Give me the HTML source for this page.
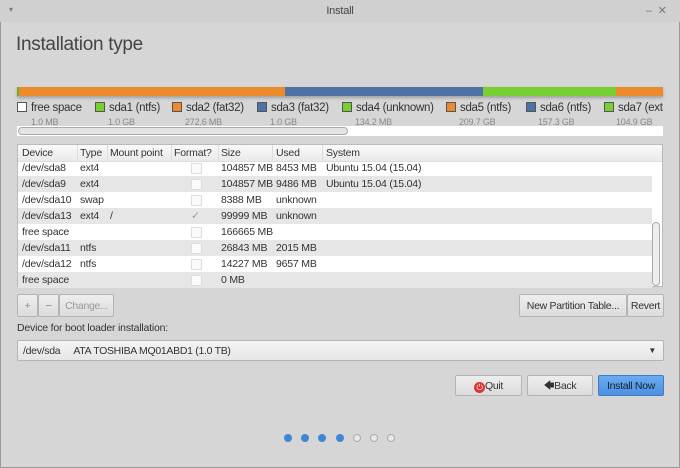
<html><head><style>
body{margin:0;width:680px;height:468px;background:#d4d4d4;font-family:"Liberation Sans",sans-serif;font-size:10px;letter-spacing:-0.2px;color:#333;position:relative;overflow:hidden}
.a{position:absolute;white-space:nowrap}
.win{left:0;top:0;width:678px;height:466px;border:1px solid #9a9a9a;background:#d6d6d6}
.btn{position:absolute;border:1px solid #b4b4b4;border-radius:2px;background:linear-gradient(#eee,#dcdcdc);text-align:center;box-sizing:border-box;line-height:22px;color:#333;white-space:nowrap;font-size:10.5px;letter-spacing:-0.3px}
.sq{display:inline-block;width:8px;height:8px;border:1px solid #555;vertical-align:-1px;margin-right:4px}
.lg{position:absolute;top:102px;font-size:11.5px;letter-spacing:-0.3px;white-space:nowrap}
.row{position:absolute;left:18px;width:634px;height:16px;line-height:17px;font-size:10.5px}
.row span{position:absolute}
.cb{position:absolute;top:3px;width:9px;height:9px;border:1px solid #ddd;background:#fafafa}
.dot{position:absolute;top:434px;width:8px;height:8px;border-radius:50%}
</style></head><body>
<div class="a win"></div>
<div class="a" style="left:0;top:0;width:680px;height:22px;background:#d0d0d0;text-align:center;line-height:22px;font-size:11px;color:#444">Install</div>
<div class="a" style="left:9px;top:5px;font-size:8px;color:#777">▾</div>
<div class="a" style="left:646px;top:4px;color:#777;font-size:11px">–&nbsp;&nbsp;✕</div>
<div class="a" style="left:16px;top:34px;font-size:19px;letter-spacing:-0.3px;color:#444">Installation type</div>
<div class="a" style="left:17px;top:87px;width:646px;height:9px;background:#eee;box-shadow:0 2px 3px rgba(0,0,0,.25)">
<div class="a" style="left:0;width:2px;height:9px;background:#6ab02b"></div>
<div class="a" style="left:2px;width:266px;height:9px;background:#ec8a2c"></div>
<div class="a" style="left:268px;width:198px;height:9px;background:#4d72a7"></div>
<div class="a" style="left:466px;width:133px;height:9px;background:#78cf31"></div>
<div class="a" style="left:599px;width:47px;height:9px;background:#ec8a2c"></div>
</div>
<div style="position:absolute;left:0;top:0;width:663px;height:140px;overflow:hidden">
<div class="lg" style="left:17px"><span class="sq" style="background:#fff"></span>free space</div>
<div class="lg" style="left:95px"><span class="sq" style="background:#78cf31"></span>sda1 (ntfs)</div>
<div class="lg" style="left:172px"><span class="sq" style="background:#ec8a2c"></span>sda2 (fat32)</div>
<div class="lg" style="left:257px"><span class="sq" style="background:#4d72a7"></span>sda3 (fat32)</div>
<div class="lg" style="left:342px"><span class="sq" style="background:#78cf31"></span>sda4 (unknown)</div>
<div class="lg" style="left:446px"><span class="sq" style="background:#ec8a2c"></span>sda5 (ntfs)</div>
<div class="lg" style="left:526px"><span class="sq" style="background:#4d72a7"></span>sda6 (ntfs)</div>
<div class="lg" style="left:604px"><span class="sq" style="background:#78cf31"></span>sda7 (ext4</div>
<div class="a" style="top:117px;left:0;font-size:9px;color:#888">
<span class="a" style="left:31px">1.0 MB</span><span class="a" style="left:108px">1.0 GB</span><span class="a" style="left:185px">272.6 MB</span><span class="a" style="left:270px">1.0 GB</span><span class="a" style="left:355px">134.2 MB</span><span class="a" style="left:459px">209.7 GB</span><span class="a" style="left:538px">157.3 GB</span><span class="a" style="left:616px">104.9 GB</span></div>
</div>
<div class="a" style="left:17px;top:126px;width:646px;height:10px;background:#fff"><div class="a" style="left:1px;top:1px;width:328px;height:6px;border:1px solid #aaa;border-radius:4px;background:#e4e4e4"></div></div>
<div class="a" style="left:17px;top:144px;width:646px;height:143px;background:#fff;border:1px solid #bbb;box-sizing:border-box;overflow:hidden">
<div class="a" style="left:0;top:0;width:646px;height:16px;background:linear-gradient(#fafafa,#eaeaea);border-bottom:1px solid #ddd;line-height:16px;font-size:10.5px">
<span class="a" style="left:4px">Device</span><span class="a" style="left:62px">Type</span><span class="a" style="left:92px">Mount point</span><span class="a" style="left:156px">Format?</span><span class="a" style="left:203px">Size</span><span class="a" style="left:258px">Used</span><span class="a" style="left:308px">System</span>
<div class="a" style="left:59px;top:0;width:1px;height:16px;background:#ddd"></div><div class="a" style="left:89px;width:1px;height:16px;background:#ddd"></div><div class="a" style="left:153px;width:1px;height:16px;background:#ddd"></div><div class="a" style="left:200px;width:1px;height:16px;background:#ddd"></div><div class="a" style="left:254px;width:1px;height:16px;background:#ddd"></div><div class="a" style="left:304px;width:1px;height:16px;background:#ddd"></div>
</div>
</div>
<div class="a" style="left:0;top:0">
<div class="row" style="top:160px"><span style="left:4px">/dev/sda8</span><span style="left:62px">ext4</span><i class="cb" style="left:173px"></i><span style="left:203px">104857 MB</span><span style="left:258px">8453 MB</span><span style="left:308px">Ubuntu 15.04 (15.04)</span></div>
<div class="row" style="top:176px;background:#e6e6e6"><span style="left:4px">/dev/sda9</span><span style="left:62px">ext4</span><i class="cb" style="left:173px"></i><span style="left:203px">104857 MB</span><span style="left:258px">9486 MB</span><span style="left:308px">Ubuntu 15.04 (15.04)</span></div>
<div class="row" style="top:192px"><span style="left:4px">/dev/sda10</span><span style="left:62px">swap</span><i class="cb" style="left:173px"></i><span style="left:203px">8388 MB</span><span style="left:258px">unknown</span></div>
<div class="row" style="top:208px;background:#e6e6e6"><span style="left:4px">/dev/sda13</span><span style="left:62px">ext4</span><span style="left:92px">/</span><span style="left:173px;color:#999">✓</span><span style="left:203px">99999 MB</span><span style="left:258px">unknown</span></div>
<div class="row" style="top:224px"><span style="left:4px">free space</span><i class="cb" style="left:173px"></i><span style="left:203px">166665 MB</span></div>
<div class="row" style="top:240px;background:#e6e6e6"><span style="left:4px">/dev/sda11</span><span style="left:62px">ntfs</span><i class="cb" style="left:173px"></i><span style="left:203px">26843 MB</span><span style="left:258px">2015 MB</span></div>
<div class="row" style="top:256px"><span style="left:4px">/dev/sda12</span><span style="left:62px">ntfs</span><i class="cb" style="left:173px"></i><span style="left:203px">14227 MB</span><span style="left:258px">9657 MB</span></div>
<div class="row" style="top:272px;background:#e6e6e6"><span style="left:4px">free space</span><i class="cb" style="left:173px"></i><span style="left:203px">0 MB</span></div>
</div>
<div class="a" style="left:652px;top:222px;width:6px;height:62px;border:1px solid #aaa;border-radius:4px;background:#eee"></div>
<div class="btn" style="left:17px;top:294px;width:21px;height:23px;color:#888">+</div>
<div class="btn" style="left:38px;top:294px;width:21px;height:23px;color:#888">−</div>
<div class="btn" style="left:59px;top:294px;width:55px;height:23px;color:#999">Change...</div>
<div class="btn" style="left:519px;top:294px;width:108px;height:23px">New Partition Table...</div>
<div class="btn" style="left:627px;top:294px;width:37px;height:23px">Revert</div>
<div class="a" style="left:17px;top:322px;font-size:10.5px">Device for boot loader installation:</div>
<div class="btn" style="left:17px;top:340px;width:647px;height:21px;line-height:20px;text-align:left;padding-left:5px;background:linear-gradient(#f4f4f4,#e6e6e6)">/dev/sda&nbsp;&nbsp;&nbsp;&nbsp;&nbsp;ATA TOSHIBA MQ01ABD1 (1.0 TB)<span class="a" style="right:7px;top:0;font-size:8px">▼</span></div>
<div class="btn" style="left:455px;top:375px;width:67px;height:21px;line-height:20px"><span style="display:inline-block;width:11px;height:11px;border-radius:50%;background:#d33;color:#fff;font-size:8px;line-height:11px;vertical-align:-1px">⏻</span>Quit</div>
<div class="btn" style="left:527px;top:375px;width:66px;height:21px;line-height:20px">🡄Back</div>
<div class="btn" style="left:598px;top:375px;width:66px;height:21px;line-height:20px;background:linear-gradient(#6aabf0,#4f90e0);border-color:#3f7cc8;color:#123">Install Now</div>
<div class="dot" style="left:284px;background:#3f86d6"></div>
<div class="dot" style="left:301px;background:#3f86d6"></div>
<div class="dot" style="left:318px;background:#3f86d6"></div>
<div class="dot" style="left:336px;background:#3f86d6"></div>
<div class="dot" style="left:353px;border:1px solid #aaa;width:6px;height:6px;background:#e8e8e8"></div>
<div class="dot" style="left:370px;border:1px solid #aaa;width:6px;height:6px;background:#e8e8e8"></div>
<div class="dot" style="left:387px;border:1px solid #aaa;width:6px;height:6px;background:#e8e8e8"></div>
</body></html>
